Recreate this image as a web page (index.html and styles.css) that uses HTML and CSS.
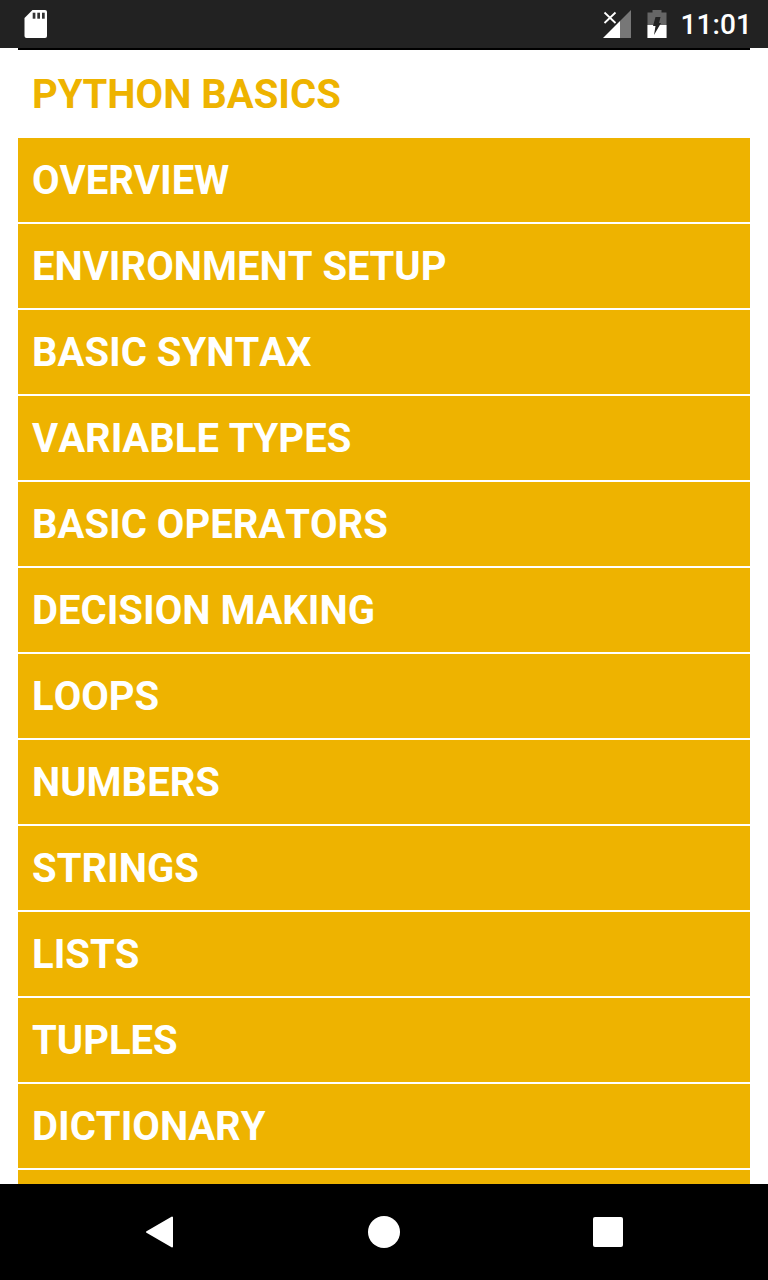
FILE: index.html
```html
<!DOCTYPE html>
<html lang="en">
<head>
    <meta charset="UTF-8">
    <meta name="viewport" content="width=device-width, initial-scale=1.0">
    <title>Python Basics</title>
    <link rel="stylesheet" href="styles.css">
</head>
<body>
    <!-- Status bar -->
    <div class="status-bar">
        <svg class="sd-icon" width="24" height="30" viewBox="0 0 24 30">
            <path d="M8.500 1H21Q23 1 23 3V27Q23 29 21 29H2.500Q0.500 29 0.500 27V9Z" fill="#fff"/>
            <rect x="8.700" y="3.700" width="2.700" height="6" fill="#333"/>
            <rect x="13.300" y="3.700" width="2.700" height="6" fill="#333"/>
            <rect x="18" y="3.700" width="2.700" height="6" fill="#333"/>
        </svg>
        <div class="status-right">
            <svg class="signal-icon" width="30" height="30" viewBox="0 0 30 30">
                <path d="M29 1V29H18V12Z" fill="#777"/>
                <path d="M18 12V29H1Z" fill="#fff"/>
                <path d="M2.500 3.500L13.500 14M13.500 3.500L2.500 14" stroke="#fff" stroke-width="1.800" fill="none"/>
            </svg>
            <svg class="battery-icon" width="20" height="30" viewBox="0 0 20 30">
                <path d="M5.500 1H14.500V3.500H19.500V29H0.500V3.500H5.500Z" fill="#666"/>
                <path d="M0.500 16H19.500V29H0.500Z" fill="#fff"/>
                <path d="M8.500 8H13.500L12 14H14L7 26L8.500 17H6Z" fill="#222"/>
            </svg>
            <span class="clock">11:01</span>
        </div>
    </div>

    <div class="content">
        <h1 class="page-title">PYTHON BASICS</h1>
        <ul class="topic-list">
            <li class="topic">OVERVIEW</li>
            <li class="topic">ENVIRONMENT SETUP</li>
            <li class="topic">BASIC SYNTAX</li>
            <li class="topic">VARIABLE TYPES</li>
            <li class="topic">BASIC OPERATORS</li>
            <li class="topic">DECISION MAKING</li>
            <li class="topic">LOOPS</li>
            <li class="topic">NUMBERS</li>
            <li class="topic">STRINGS</li>
            <li class="topic">LISTS</li>
            <li class="topic">TUPLES</li>
            <li class="topic">DICTIONARY</li>
            <li class="topic"></li>
        </ul>
    </div>

    <!-- Navigation bar -->
    <div class="nav-bar">
        <svg width="30" height="34" viewBox="0 0 30 34">
            <path d="M27 2.500V31.500L2 17Z" fill="#fff" stroke="#fff" stroke-width="2" stroke-linejoin="round"/>
        </svg>
        <div class="nav-home"></div>
        <div class="nav-recent"></div>
    </div>
</body>
</html>
```

FILE: styles.css
```css
body {
    font-family: Roboto, sans-serif;
    background-color: #fff;
    margin: 0;
    padding: 0;
    display: flex;
    flex-direction: column;
    height: 1280px;
    overflow: hidden;
}

/* Status bar */
.status-bar {
    background-color: #222;
    height: 48px;
    flex-shrink: 0;
    display: flex;
    justify-content: space-between;
    align-items: center;
    padding: 0 16px 0 24px;
}

.sd-icon {
    display: block;
}

.status-right {
    display: flex;
    align-items: center;
}

.signal-icon {
    margin-right: 15px;
}

.battery-icon {
    margin-right: 13px;
}

.clock {
    color: #fff;
    font-size: 28px;
    font-weight: 500;
    letter-spacing: 0.1px;
}

/* Main content */
.content {
    flex: 1;
    min-height: 0;
    overflow: hidden;
    margin: 0 18px;
    border-top: 2px solid #000;
}

.page-title {
    color: #eeb300;
    font-size: 40px;
    font-weight: 700;
    line-height: 90px;
    height: 88px;
    margin: 0;
    padding-left: 14px;
    font-kerning: none;
}

.topic-list {
    list-style: none;
    margin: 0;
    padding: 0;
    display: flex;
    flex-direction: column;
    gap: 2px;
}

.topic {
    background-color: #eeb300;
    color: #fff;
    font-size: 40px;
    font-weight: 700;
    line-height: 86px;
    height: 84px;
    flex-shrink: 0;
    padding-left: 14px;
    font-kerning: none;
}

/* Navigation bar */
.nav-bar {
    background-color: #000;
    height: 96px;
    flex-shrink: 0;
    display: flex;
    justify-content: space-between;
    align-items: center;
    padding: 0 145px;
}

.nav-home {
    width: 32px;
    height: 32px;
    border-radius: 50%;
    background-color: #fff;
}

.nav-recent {
    width: 30px;
    height: 30px;
    border-radius: 2px;
    background-color: #fff;
}
```
